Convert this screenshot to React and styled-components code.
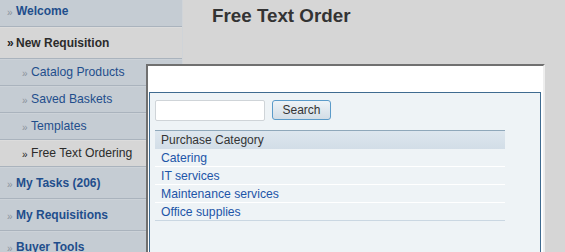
import React, { useState } from 'react'
import styled, { createGlobalStyle } from 'styled-components'

const GlobalStyle = createGlobalStyle`
    html, body {
        margin: 0;
        padding: 0;
        background: #d6d6d6;
        font-family: "Liberation Sans", Arial, sans-serif;
    }
`;

const Page = styled.div`
    position: relative;
    display: flex;
    width: 565px;
    height: 252px;
    overflow: hidden;
    background: #d6d6d6;
`;

const Sidebar = styled.nav`
    width: 182px;
    flex-shrink: 0;
    margin-top: -5px;
    background: #c5ccd3;
    border-right: 1px solid #d0d4d8;
`;

const NavItem = styled.div`
    display: flex;
    align-items: center;
    height: ${props => props.$sub ? '26px' : '31px'};
    padding-left: ${props => props.$sub ? '22px' : '7px'};
    background: ${props => props.$active ? '#d6d6d6' : '#c5ccd3'};
    border-bottom: 1px solid #aab3bd;
    box-shadow: inset 0 1px 0 ${props => props.$active ? '#dcdcdc' : '#ccd2d8'};
    font-size: ${props => props.$sub ? '12.2px' : '12px'};
    font-weight: ${props => props.$sub ? 400 : 700};
    color: ${props => props.$active ? '#2b2b2b' : '#1f4e8c'};
    white-space: nowrap;
`;

const Arrow = styled.span`
    display: inline-block;
    width: 9px;
    font-size: ${props => props.$strong ? '12px' : '10px'};
    font-weight: ${props => props.$strong ? 700 : 400};
    color: ${props => props.$dark ? '#222' : '#8b939c'};
    margin-top: ${props => props.$strong ? '0' : '3px'};
`;

const Main = styled.main`
    flex: 1;
    padding: 5px 0 0 29px;
`;

const Title = styled.h1`
    margin: 0;
    font-size: 18.8px;
    font-weight: 700;
    color: #333;
`;

const Dialog = styled.div`
    position: absolute;
    left: 146px;
    top: 64px;
    width: 392px;
    height: 200px;
    background: #fff;
    border-top: 2px solid #707070;
    border-left: 2px solid #707070;
    border-right: 2px solid #eeeeee;
    padding: 26px 2px 0 1px;
`;

const Panel = styled.div`
    height: 100%;
    background: #eef3f6;
    border: 1px solid #3f6b90;
    padding: 7px 0 0 5px;
`;

const SearchRow = styled.div`
    display: flex;
    align-items: flex-start;
    gap: 7px;
`;

const SearchInput = styled.input`
    width: 110px;
    height: 21px;
    box-sizing: border-box;
    margin: 0;
    border: 1px solid #cfd4d8;
    border-radius: 2px;
    background: #fff;
    font-family: inherit;
    font-size: 12px;
`;

const Button = styled.button`
    width: 59px;
    height: 20px;
    box-sizing: border-box;
    padding: 0;
    border: 1px solid #5b9bc9;
    border-radius: 3px;
    background: linear-gradient(#eef3f7, #d3dde6);
    font-family: inherit;
    font-size: 12px;
    color: #333;
    cursor: pointer;
`;

const Table = styled.div`
    width: 350px;
    margin-top: 9px;
`;

const HeaderCell = styled.div`
    height: 18px;
    line-height: 18px;
    padding-left: 6px;
    border-top: 1px solid #8fa8ba;
    background: linear-gradient(#dde6ee, #d2dde7);
    font-size: 12px;
    color: #333;
`;

const Row = styled.div`
    height: 17px;
    line-height: 18px;
    padding-left: 6px;
    border-bottom: 1px solid ${props => props.$last ? '#cad7e2' : '#ffffff'};
    font-size: 12.2px;
    color: #1d55a8;
`;

const nav = [
    { label: 'Welcome' },
    { label: 'New Requisition', active: true },
    { label: 'Catalog Products', sub: true },
    { label: 'Saved Baskets', sub: true },
    { label: 'Templates', sub: true },
    { label: 'Free Text Ordering', sub: true, active: true },
    { label: 'My Tasks (206)' },
    { label: 'My Requisitions' },
    { label: 'Buyer Tools' },
];

const categories = ['Catering', 'IT services', 'Maintenance services', 'Office supplies'];

const App = () => {
    const [query, setQuery] = useState('');

    return (
        <Page>
            <GlobalStyle />
            <Sidebar>
                {nav.map(item => (
                    <NavItem key={item.label} $sub={item.sub} $active={item.active}>
                        <Arrow $dark={item.active} $strong={item.active && !item.sub}>»</Arrow>
                        {item.label}
                    </NavItem>
                ))}
            </Sidebar>
            <Main>
                <Title>Free Text Order</Title>
            </Main>
            <Dialog>
                <Panel>
                    <SearchRow>
                        <SearchInput value={query} onChange={(e) => setQuery(e.target.value)} />
                        <Button>Search</Button>
                    </SearchRow>
                    <Table>
                        <HeaderCell>Purchase Category</HeaderCell>
                        {categories.map((c, i) => (
                            <Row key={c} $last={i === categories.length - 1}>{c}</Row>
                        ))}
                    </Table>
                </Panel>
            </Dialog>
        </Page>
    )
}

export default App
